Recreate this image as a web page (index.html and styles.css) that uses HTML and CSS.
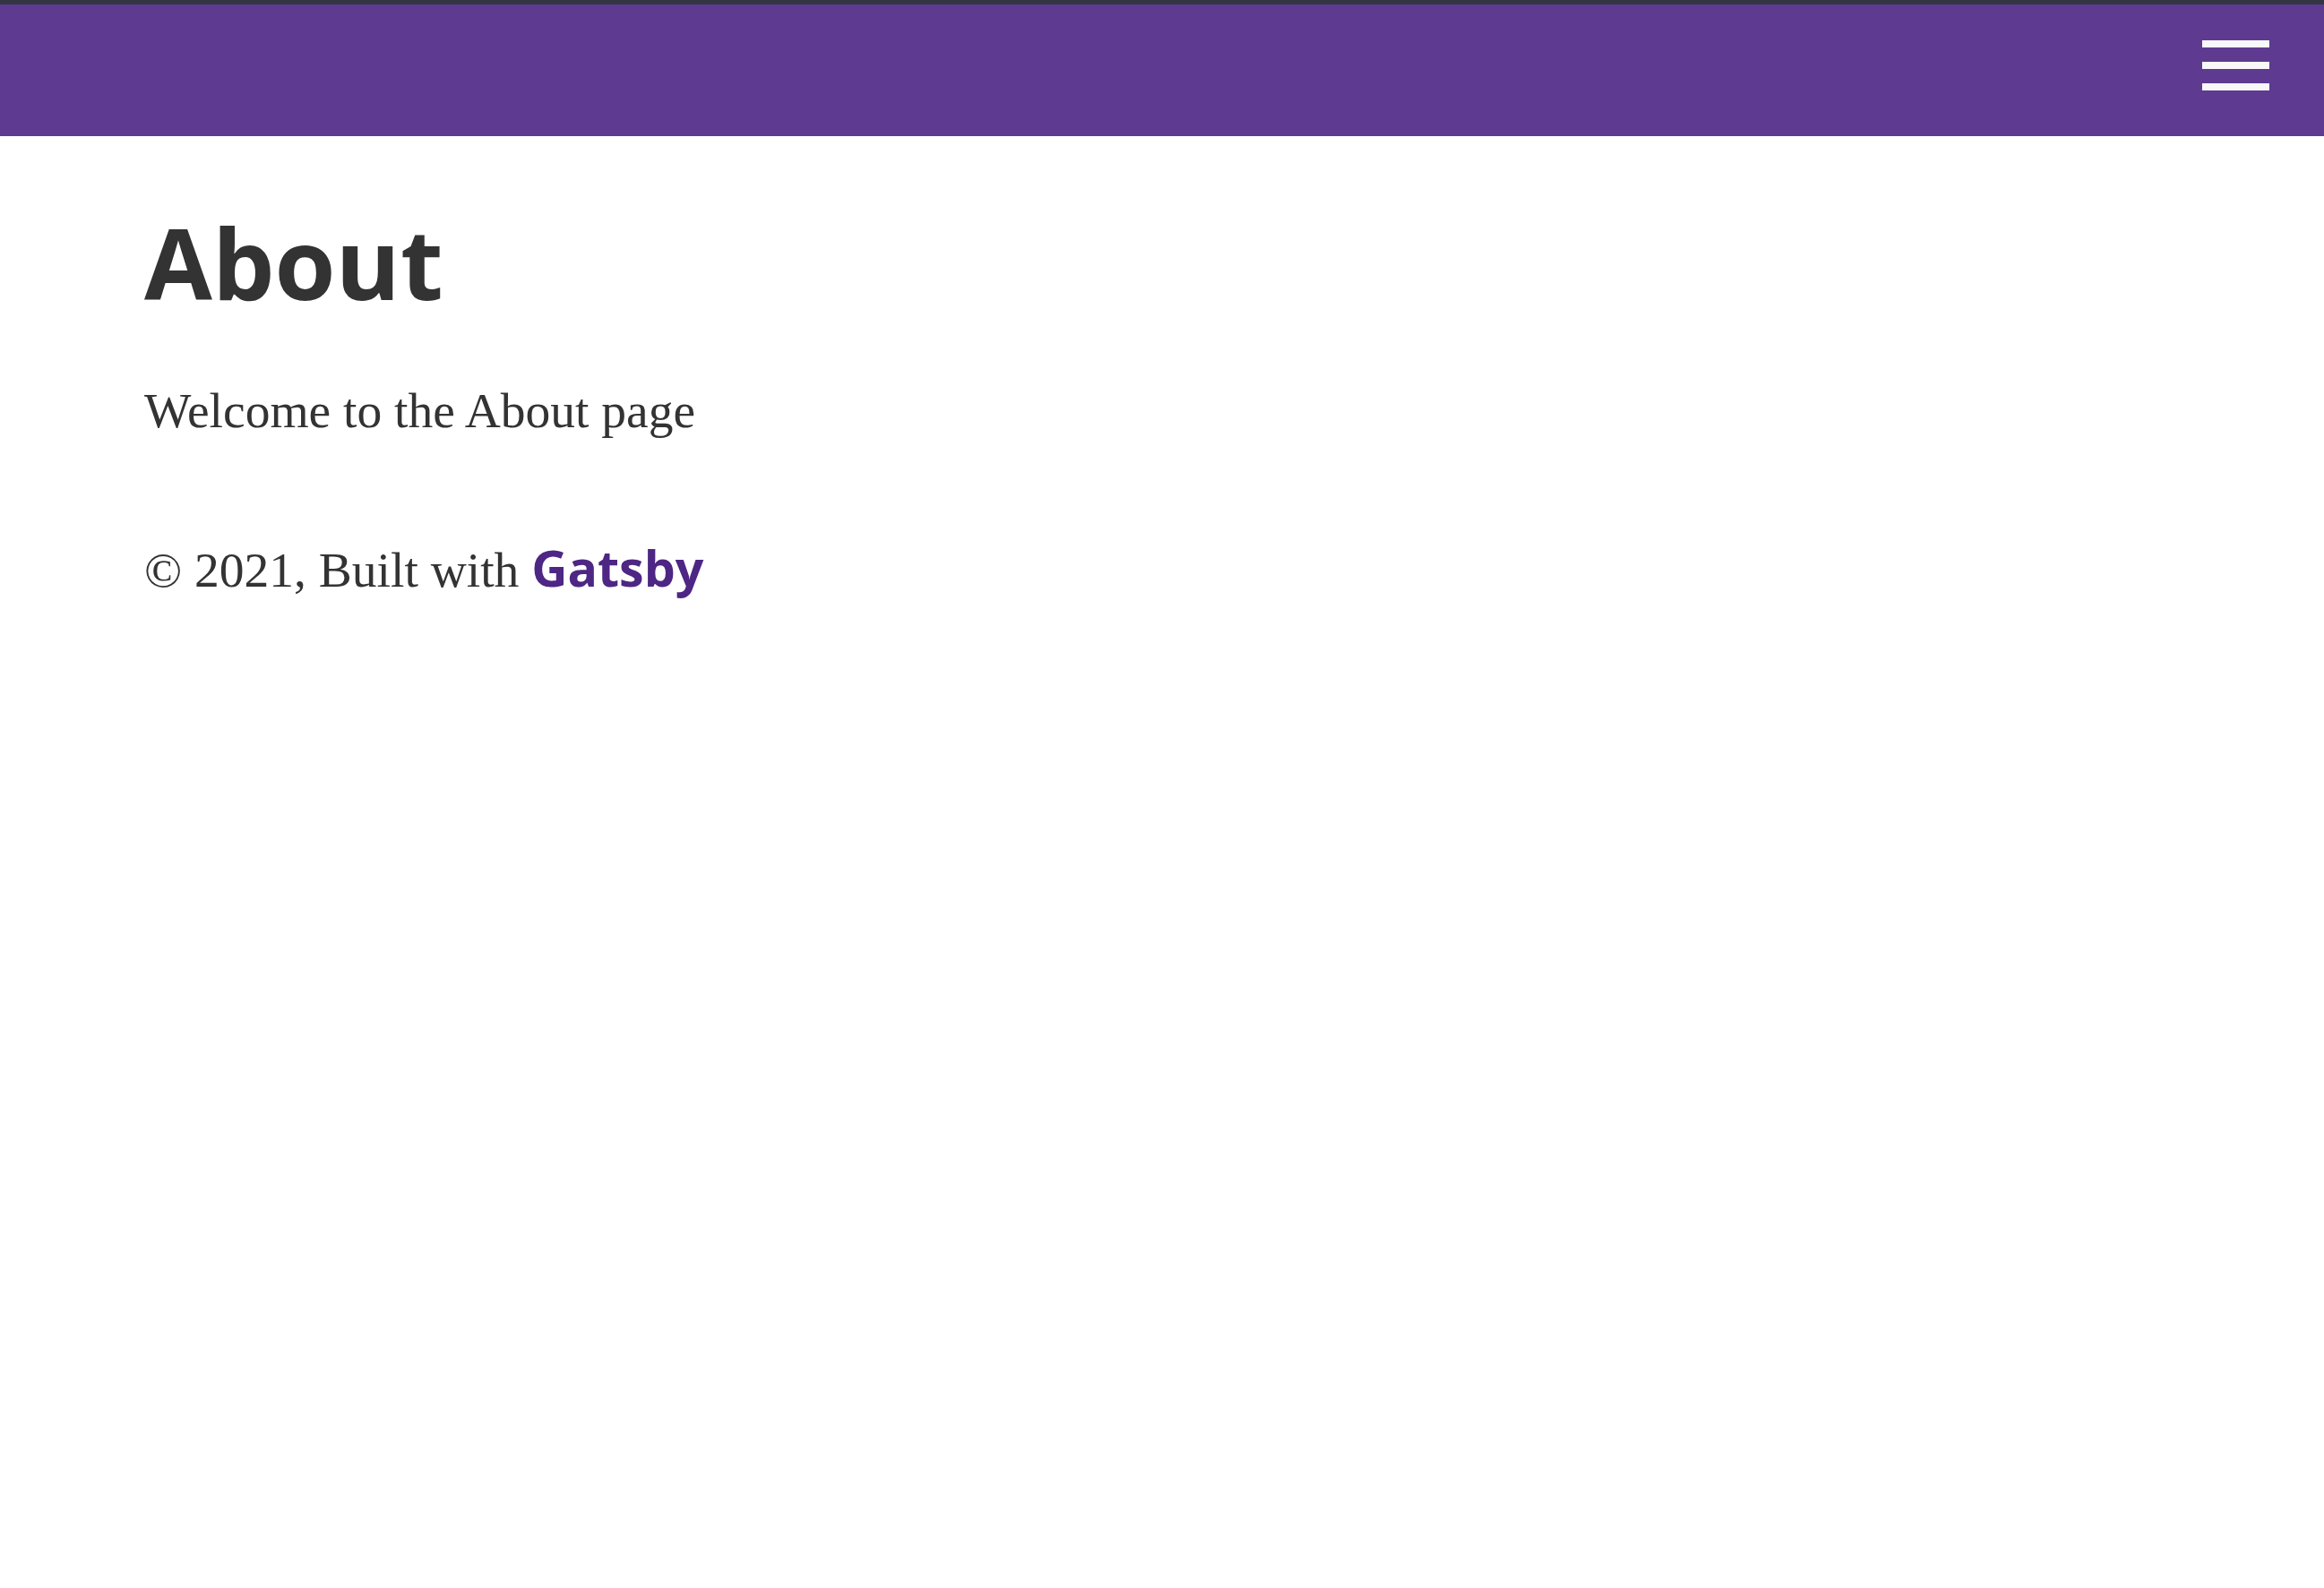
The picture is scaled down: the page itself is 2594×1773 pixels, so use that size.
FILE: index.html
```html
<!DOCTYPE html>
<html lang="en">
<head>
<meta charset="utf-8">
<title>About</title>
<link rel="stylesheet" href="styles.css">
</head>
<body>
<header class="site-header">
  <button class="menu-button" aria-label="Menu">
    <span class="bar"></span>
    <span class="bar"></span>
    <span class="bar"></span>
  </button>
</header>
<div class="page">
  <main>
    <h1 class="title">About</h1>
    <p class="intro">Welcome to the About page</p>
  </main>
  <footer class="site-footer">
    © 2021, Built with <a class="gatsby-link" href="#">Gatsby</a>
  </footer>
</div>
</body>
</html>
```
FILE: styles.css
```css
html, body {
  margin: 0;
  padding: 0;
  background: #ffffff;
}

body {
  font-family: "Liberation Serif", "DejaVu Serif", serif;
  color: #333333;
}

.site-header {
  border-top: 5px solid #333640;
  background: #5e3a91;
  height: 147px;
  display: flex;
  justify-content: flex-end;
  align-items: flex-start;
  padding-right: 61px;
}

.menu-button {
  margin-top: 40px;
  width: 75px;
  padding: 0;
  border: 0;
  background: transparent;
  display: flex;
  flex-direction: column;
  gap: 16px;
  cursor: pointer;
}

.bar {
  display: block;
  width: 75px;
  height: 8px;
  background: #f8f8f8;
}

.page {
  padding: 0 0 0 161px;
}

.title {
  margin: 0;
  padding-top: 85px;
  font-family: "Open Sans", "DejaVu Sans", sans-serif;
  font-weight: 700;
  font-size: 110px;
  line-height: 1;
  color: #333333;
}

.intro {
  margin: 79px 0 0;
  font-size: 55.5px;
  line-height: 1.2;
}

.site-footer {
  margin-top: 108px;
  font-size: 55.5px;
  line-height: 1.2;
}

.gatsby-link {
  font-family: "Open Sans", "DejaVu Sans", sans-serif;
  font-weight: 700;
  color: #4e2683;
  text-decoration: none;
}
```
